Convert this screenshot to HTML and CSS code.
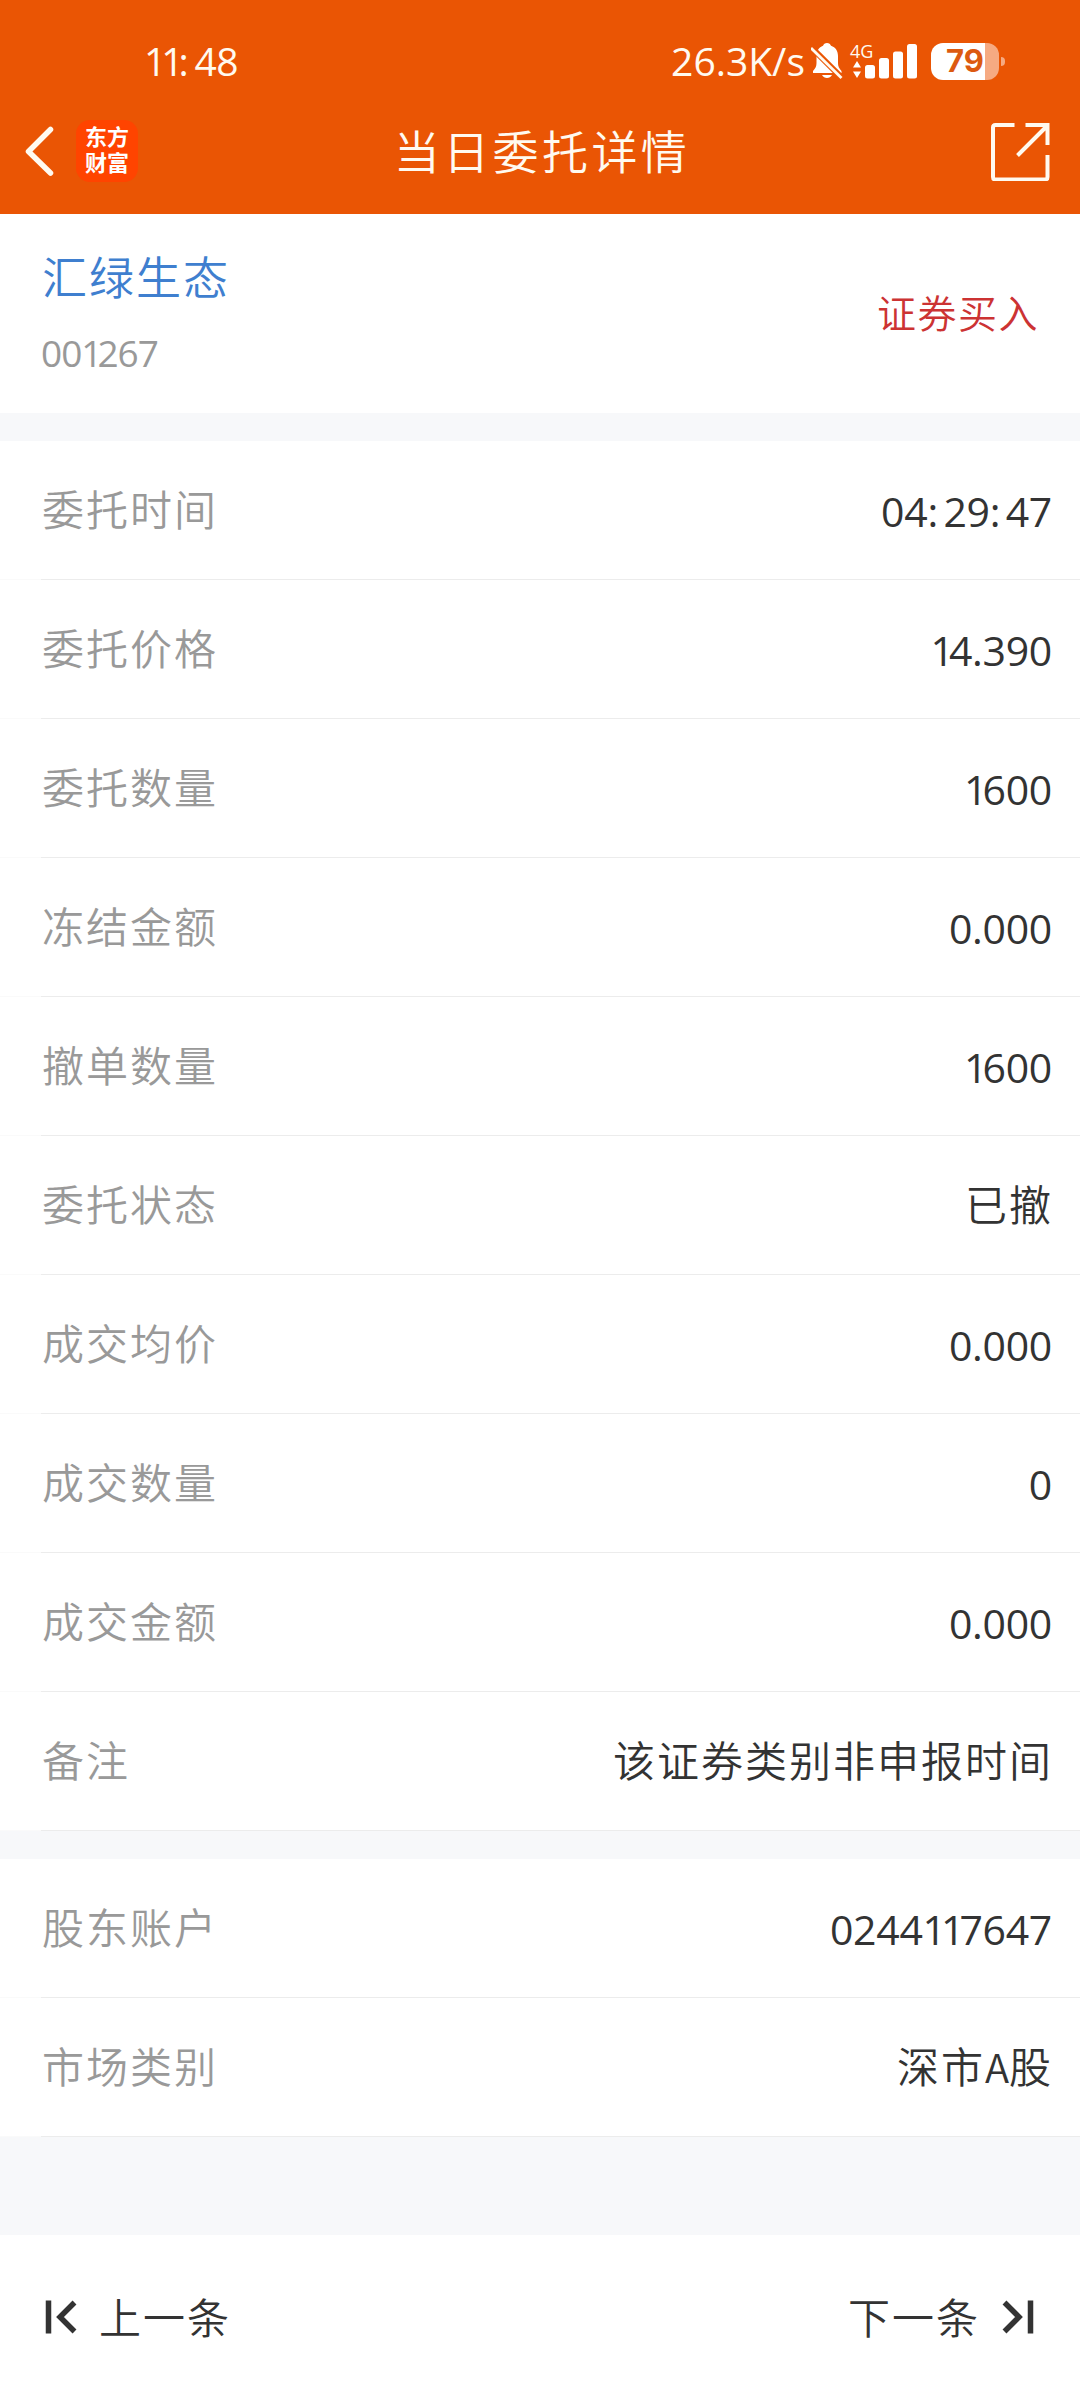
FILE: index.html
```html
<!DOCTYPE html>
<html lang="zh-CN">
<head>
<meta charset="utf-8">
<title>当日委托详情</title>
<link rel="stylesheet" href="styles.css">
</head>
<body>
<header class="header">
  <div class="status">
    <span class="clock"><span class="one">11</span><span class="colon">:</span>48</span>
    <div class="status-right">
      <span class="speed">26.3K/s</span>
      <svg class="bell" width="32" height="36" viewBox="0 0 32 36">
        <path fill="#fff" d="M16 0c2 0 3.500 1.200 4 2.800 4.600 1.500 7 5.300 7 10.200v7c0 3 1 5.500 3.500 8v2H2v-2c2.500-2.500 3.500-5 3.500-8v-7C5.500 8 8 4.300 12 2.800 12.500 1.200 14 0 16 0zM11 32h10c-1 2-3 3-5 3s-4-1-5-3z"/>
        <path stroke="#ea5504" stroke-width="6" d="M-1 3 33 37"/>
        <path stroke="#fffaf0" stroke-width="2.800" d="M0 5 30.500 35"/>
      </svg>
      <div class="network">
        <span class="net-type">4G</span>
        <svg width="68" height="35" viewBox="0 0 68 35" fill="#fff">
          <path d="M3 23.500 7 17l4 6.500zM3 27.500h8L7 34z"/>
          <rect x="15" y="21" width="10" height="13.500" rx="2.500"/>
          <rect x="29" y="14" width="10" height="20.500" rx="2.500"/>
          <rect x="43" y="7.500" width="10" height="27" rx="2.500"/>
          <rect x="57" y="0" width="10" height="34.500" rx="2.500"/>
        </svg>
      </div>
      <div class="battery"><span class="charge">79</span></div>
      <i class="battery-tip"></i>
    </div>
  </div>
  <div class="navbar">
    <div class="nav-left">
      <svg width="32" height="52" viewBox="0 0 32 52" fill="none" stroke="#fffaf0" stroke-width="5.500" stroke-linecap="round" stroke-linejoin="round"><path d="M28.500 4.500 6.500 26.500 28.500 48"/></svg>
      <div class="logo"><span>东方</span><span>财富</span></div>
    </div>
    <h1 class="title">当日委托详情</h1>
    <svg class="share" width="60" height="60" viewBox="0 0 60 60" fill="none" stroke="#fffaf0" stroke-width="4"><path d="M24.500 4H5.500Q3 4 3 6.500V56Q3 58.500 5.500 58.500H55Q57.500 58.500 57.500 56V34M35.500 4H57.500V24M27.500 34.500 57 5"/></svg>
  </div>
</header>

<main>
  <section class="stock">
    <div>
      <div class="stock-name">汇绿生态</div>
      <div class="stock-code">00<span class="one">1</span>267</div>
    </div>
    <div class="side">证券买入</div>
  </section>

  <section class="list">
    <div class="row"><span class="label">委托时间</span><span class="value num">04<span class="colon">:</span>29<span class="colon">:</span>47</span></div>
    <div class="row"><span class="label">委托价格</span><span class="value num"><span class="one">1</span>4.390</span></div>
    <div class="row"><span class="label">委托数量</span><span class="value num"><span class="one">1</span>600</span></div>
    <div class="row"><span class="label">冻结金额</span><span class="value num">0.000</span></div>
    <div class="row"><span class="label">撤单数量</span><span class="value num"><span class="one">1</span>600</span></div>
    <div class="row"><span class="label">委托状态</span><span class="value">已撤</span></div>
    <div class="row"><span class="label">成交均价</span><span class="value num">0.000</span></div>
    <div class="row"><span class="label">成交数量</span><span class="value num">0</span></div>
    <div class="row"><span class="label">成交金额</span><span class="value num">0.000</span></div>
    <div class="row"><span class="label">备注</span><span class="value">该证券类别非申报时间</span></div>
  </section>

  <section class="list">
    <div class="row"><span class="label">股东账户</span><span class="value num">0244<span class="one">11</span>7647</span></div>
    <div class="row"><span class="label">市场类别</span><span class="value">深市<span class="latin">A</span>股</span></div>
  </section>
</main>

<footer class="pager">
  <div class="page-link">
    <svg width="32" height="34" viewBox="0 0 32 34" fill="none" stroke="#333" stroke-width="5.500"><path d="M3.500 .5V33.500M29.500 2.500 15 17 29.500 31.500"/></svg>
    <span class="page-text">上一条</span>
  </div>
  <div class="page-link">
    <span class="page-text">下一条</span>
    <svg width="32" height="34" viewBox="0 0 32 34" fill="none" stroke="#333" stroke-width="5.500"><path d="M28.500 .5V33.500M2.500 2.500 17 17 2.500 31.500"/></svg>
  </div>
</footer>
</body>
</html>
```
FILE: styles.css
```css
* { box-sizing: border-box; }

body {
  margin: 0;
  width: 1080px;
  height: 2400px;
  display: flex;
  flex-direction: column;
  background: #f7f8fa;
  color: #333;
  font-family: "Noto Sans CJK SC", sans-serif;
  font-weight: 350;
}

svg { display: block; flex: none; }

/* Header */
.header {
  height: 214px;
  padding-top: 34px;
  background: #ea5504;
  color: #fffaf0;
}

.status {
  display: flex;
  justify-content: space-between;
  align-items: center;
  height: 54px;
  padding: 0 75px 0 144px;
}

.clock, .speed, .net-type, .stock-code, .num {
  font-family: "Open Sans", "Noto Sans CJK SC", sans-serif;
  font-weight: 400;
}

.clock, .speed {
  font-size: 39px;
  line-height: 54px;
  white-space: nowrap;
}

.clock { letter-spacing: -0.6px; }
.colon { display: inline-block; width: 16px; }
.speed { margin-right: 6px; }

.status-right { display: flex; align-items: center; }

.network { position: relative; margin: 0 13px 0 7px; }

.net-type {
  position: absolute;
  left: 0;
  top: -1px;
  font-size: 18px;
  line-height: 16px;
}

.battery {
  width: 68px;
  height: 37px;
  border-radius: 12px;
  background: linear-gradient(to right, #fff 54px, #f6aa82 54px);
  text-align: center;
}

.charge {
  font: 700 31px/36px Inter, sans-serif;
  color: #dc5a10;
}

.battery-tip {
  width: 4px;
  height: 9px;
  margin-left: 2px;
  border-radius: 0 4px 4px 0;
  background: #f6aa82;
}

.navbar {
  display: grid;
  grid-template-columns: 1fr auto 1fr;
  align-items: center;
  height: 126px;
  padding: 0 30px 0 22px;
}

.nav-left { display: flex; align-items: center; gap: 22px; }

.logo {
  width: 62px;
  height: 62px;
  padding-top: 4px;
  border-radius: 14px;
  background: #ff4400;
  display: flex;
  flex-direction: column;
  align-items: center;
}

.logo span {
  font-family: Lato, "Noto Sans CJK SC", sans-serif;
  font-size: 22px;
  line-height: 26px;
  font-weight: 700;
  color: #fff;
}

.title {
  margin: -4px 0 0;
  padding-left: 12px;
  font-size: 46px;
  font-weight: 350;
  line-height: 60px;
  letter-spacing: 3.4px;
}

.share { justify-self: end; }

/* Stock summary */
.stock {
  display: flex;
  justify-content: space-between;
  align-items: center;
  height: 199px;
  padding: 0 41px;
  background: #fff;
}

.stock-name {
  margin-top: -3px;
  padding-left: 1px;
  font-size: 45px;
  line-height: 62px;
  letter-spacing: 2px;
  color: #3f7fcf;
}

.stock-code {
  margin-top: 19px;
  font-size: 37px;
  line-height: 54px;
  letter-spacing: -1px;
  color: #999;
}

.side {
  padding-bottom: 5px;
  font-size: 39px;
  letter-spacing: 1.5px;
  color: #cc3333;
}

/* Order details */
.list { margin-top: 28px; background: #fff; }

.row {
  display: flex;
  justify-content: space-between;
  align-items: center;
  height: 139px;
  padding: 0 28px 0 42px;
  background: linear-gradient(to right, #fafafa 41px, #ececec 41px) bottom / 100% 1px no-repeat;
}

.label {
  padding-bottom: 6px;
  font-size: 42px;
  letter-spacing: 2px;
  color: #999;
}

.value {
  margin-right: -1px;
  padding-bottom: 6px;
  font-size: 42px;
  letter-spacing: 2px;
}

.num {
  margin-right: 0;
  padding-bottom: 0;
  font-size: 41px;
  letter-spacing: -0.3px;
}

.one { letter-spacing: -5px; }
.latin { font-size: 40px; letter-spacing: 0; }

/* Previous and next order */
.pager {
  display: flex;
  justify-content: space-between;
  height: 165px;
  margin-top: auto;
  padding: 51px 46px 0 45px;
  background: #fff;
}

.page-link {
  display: flex;
  align-items: center;
  gap: 22px;
  height: 62px;
  font-size: 42px;
  letter-spacing: 2px;
}

.page-text { padding-bottom: 3px; }
```
